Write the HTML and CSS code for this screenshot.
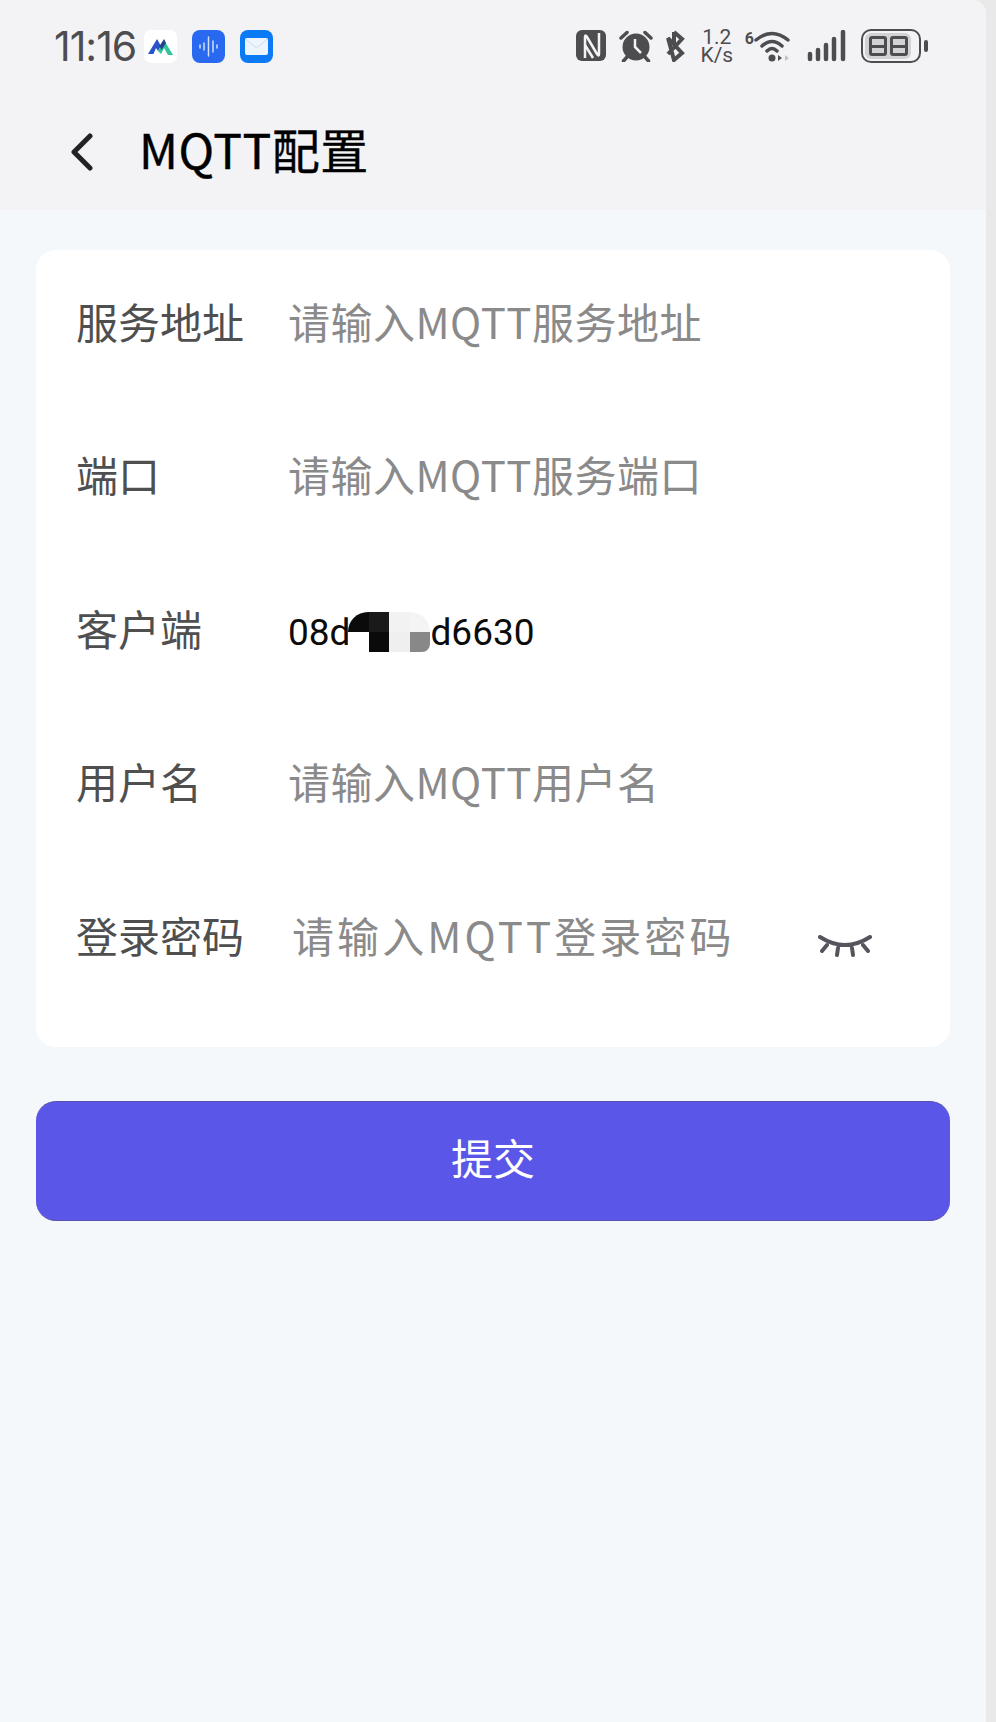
FILE: index.html
```html
<!DOCTYPE html>
<html lang="zh">
<head>
<meta charset="utf-8">
<title>MQTT配置</title>
<link rel="stylesheet" href="styles.css">
</head>
<body>
<div class="screen">
  <div class="header">
    <div class="statusbar">
      <span class="time">11:16</span>
      <div class="apps">
        <svg class="app" viewBox="0 0 33 33">
          <rect width="33" height="33" rx="7" fill="#fff"/>
          <path d="M4 24 L13 9 L17 16 L14 21 L12 18 L9.500 24 Z" fill="#2a52c9"/>
          <path d="M14 21 L20 10 L29 25 L24 25 L20 18 L17 24 Z" fill="#2fc49a"/>
          <path d="M15.500 16 L20 9 L22 13 L17.500 20 Z" fill="#23408f"/>
        </svg>
        <svg class="app" viewBox="0 0 33 33">
          <rect width="33" height="33" rx="8" fill="#2869f0"/>
          <path d="M8 15v3M12 13v7M16.500 7v19M21 11v11M25 15v3" stroke="#cfe0ff" stroke-width="1.500" stroke-linecap="round"/>
        </svg>
        <svg class="app" viewBox="0 0 33 33">
          <rect width="33" height="33" rx="8" fill="#0a7bf5"/>
          <rect x="5" y="8" width="23" height="17" rx="2" fill="#eef4fb"/>
          <path d="M5.500 9 L16.500 18 L27.500 9" fill="none" stroke="#c9dcf2" stroke-width="1"/>
        </svg>
      </div>
      <div class="status-icons">
        <svg class="ic-nfc" viewBox="0 0 30 32">
          <rect width="30" height="31" rx="6" fill="#4d4d50"/>
          <path d="M9 28 V7 Q9 4 11 7 L21 24 Q23 27 23 24 V3" fill="none" stroke="#f3f3f6" stroke-width="2.500"/>
          <path d="M9 15 L17 28" fill="none" stroke="#f3f3f6" stroke-width="2.500"/>
        </svg>
        <svg class="ic-alarm" viewBox="0 0 34 32">
          <circle cx="17" cy="17" r="13.500" fill="#4d4d50"/>
          <path d="M2 8 L8 2.500 M32 8 L26 2.500 M8 27 L4.500 31 M26 27 L29.500 31" stroke="#4d4d50" stroke-width="3.500" stroke-linecap="round"/>
          <path d="M16 9 V17 L22 23" stroke="#f3f3f6" stroke-width="2.500" fill="none"/>
        </svg>
        <svg class="ic-bt" viewBox="0 0 22 32">
          <path d="M10 2 L18 9 L4 24 M4 8 L18 23 L10 30 Z M10 2 V14" fill="none" stroke="#4d4d50" stroke-width="4"/>
        </svg>
        <div class="speed">1.2 K/s</div>
        <div class="wifi">
          <span class="wifi-six">6</span>
          <svg class="ic-wifi" viewBox="0 0 38 32">
            <path d="M3 10 Q19 -3 35 10 M9 16 Q19 7 29 16 M14 21 Q19 16 24 21" fill="none" stroke="#4d4d50" stroke-width="3.500" stroke-linecap="round"/>
            <circle cx="19" cy="28" r="3.500" fill="#4d4d50"/>
            <path d="M25 25 L29 28 L25 31 Z" fill="#4d4d50"/>
            <path d="M32 25 L36 28 L32 31 Z" fill="#c2c2c4"/>
          </svg>
        </div>
        <svg class="ic-signal" viewBox="0 0 40 32">
          <path d="M3 24v5M11 20v9M19 15v14M27 9v20M36 2v27" stroke="#4d4d50" stroke-width="4.500" stroke-linecap="round"/>
        </svg>
        <div class="battery">
          <div class="battery-body">
            <div class="battery-fill"><span class="digit"></span><span class="digit"></span></div>
          </div>
          <div class="battery-tip"></div>
        </div>
      </div>
    </div>
    <div class="titlebar">
      <svg class="back" viewBox="0 0 24 38">
        <path d="M20 3 L4 19 L20 35" fill="none" stroke="#222" stroke-width="5" stroke-linecap="round" stroke-linejoin="round"/>
      </svg>
      <h1 class="title">MQTT配置</h1>
    </div>
  </div>

  <div class="content">
    <div class="card">
      <div class="row">
        <span class="label">服务地址</span>
        <span class="placeholder">请输入MQTT服务地址</span>
      </div>
      <div class="row">
        <span class="label">端口</span>
        <span class="placeholder">请输入MQTT服务端口</span>
      </div>
      <div class="row">
        <span class="label">客户端</span>
        <span class="value">08d<span class="mosaic"><i class="m1"></i><i class="m2"></i><i class="m3"></i><i class="m4"></i><i class="m5"></i><i class="m6"></i><i class="m7"></i><i class="m8"></i></span>d6630</span>
      </div>
      <div class="row">
        <span class="label">用户名</span>
        <span class="placeholder">请输入MQTT用户名</span>
      </div>
      <div class="row">
        <span class="label">登录密码</span>
        <span class="placeholder wide">请输入MQTT登录密码</span>
        <svg class="eye" viewBox="0 0 54 22">
          <path d="M2 2 Q27 18 52 2 M9 10 L4 16 M20 13 L19 20 M34 13 L35 20 M45 10 L50 16" fill="none" stroke="#55555d" stroke-width="4" stroke-linecap="round"/>
        </svg>
      </div>
    </div>
    <button class="submit">提交</button>
  </div>
</div>
</body>
</html>
```

FILE: styles.css
```css
html, body {margin: 0; padding: 0; height: 100%;}
body {
  background: #e9e9ea;
  font-family: "Noto Sans CJK SC", "Noto Sans", sans-serif;
}

.screen {
  width: 986px; height: 1722px;
  background: #f5f8fa;
  border-top-right-radius: 14px;
  overflow: hidden;
}

/*header*/
.header {background: #f3f3f6; height: 210px;}
.statusbar {
  display: flex; align-items: center;
  height: 92px; padding: 0 58px 0 54px;
}
.time {
  width: 90px;
  font: 41px/1 "Inter", sans-serif;
  letter-spacing: -1px;
  color: #4d4d50;
}
.apps {display: flex; gap: 15px;}
.app {display: block; width: 33px; height: 33px;}
.status-icons {display: flex; align-items: center; margin-left: auto; color: #4d4d50;}
.ic-nfc {width: 30px; height: 32px;}
.ic-alarm {width: 34px; height: 32px; margin-left: 13px;}
.ic-bt {width: 22px; height: 32px; margin-left: 11px;}
.speed {
  margin-left: 14px; width: 34px;
  text-align: center;
  font: 21px/18px "Roboto", sans-serif;
}
.wifi {display: flex; align-items: flex-start; margin-left: 11px;}
.wifi-six {font: bold 16px/18px "Roboto", sans-serif; margin-right: -1px;}
.ic-wifi {width: 38px; height: 32px;}
.ic-signal {width: 40px; height: 32px; margin-left: 16px;}
.battery {display: flex; align-items: center; margin-left: 14px;}
.battery-body {
  width: 60px; height: 34px;
  border: 2.500px solid #4d4d50; border-radius: 10px;
  padding: 2px; box-sizing: border-box;
}
.battery-fill {
  display: flex; align-items: center; justify-content: center; gap: 3px;
  width: 46px; height: 100%;
  background: #d2d2d4; border-radius: 6px;
}
.digit {
  width: 12px; height: 14px;
  border: 3px solid #4d4d50; border-radius: 3px;
  background: linear-gradient(#4d4d50, #4d4d50) center / 100% 3px no-repeat;
}
.battery-tip {width: 4px; height: 12px; margin-left: 3px; background: #4d4d50; border-radius: 2px;}

.titlebar {display: flex; align-items: center; height: 116px;}
.back {width: 24px; height: 38px; margin: 4px 0 0 70px;}
.title {
  margin: 0 0 4px 45px;
  font-size: 48px; font-weight: 400; line-height: 1;
  letter-spacing: 0.500px;
  color: #000;
  -webkit-text-stroke: 0.400px #000;
}

/*form*/
.content {padding: 40px 36px 0;}
.card {
  background: #fff; border-radius: 20px;
  height: 797px; box-sizing: border-box;
  padding: 23px 40px 0;
  display: flex; flex-direction: column; gap: 53.5px;
}
.row {display: flex; align-items: center; height: 100px; box-sizing: border-box; padding-bottom: 6px; font-size: 42px;}
.label {width: 212px; flex-shrink: 0; color: #4f4f4f;}
.placeholder {color: #8a8a8a; letter-spacing: 0.500px;}
.placeholder.wide {margin-left: 4px; letter-spacing: 3.100px;}
.value {display: flex; align-items: center; margin-top: 10px; font-family: "Roboto", sans-serif; font-size: 37px; color: #0b0b0b;}
.mosaic {
  display: grid; grid-template-columns: repeat(4, 20.500px); grid-auto-rows: 20px;
  margin: 0 0 0 -2px;
  overflow: hidden; border-radius: 20px 20px 8px 0;
}
.m1 {background: #0b0b0b;}
.m2 {background: #1a1a1a;}
.m3 {background: #f2f2f2;}
.m4 {background: #f4f4f4;}
.m5 {background: #fff;}
.m6 {background: #0a0a0a;}
.m7 {background: #efefef;}
.m8 {background: #888;}
.eye {width: 54px; height: 22px; margin: 24px 38px 0 auto;}

.submit {
  display: block; width: 100%; height: 120px;
  margin-top: 54px; padding: 0 0 10px;
  background: #5956e8; color: #fff;
  border: 0; border-bottom: 1px solid #5a52b0; border-top: 1px solid #5a52b0;
  border-radius: 20px;
  font: 42px "Noto Sans CJK SC", sans-serif;
}
```
